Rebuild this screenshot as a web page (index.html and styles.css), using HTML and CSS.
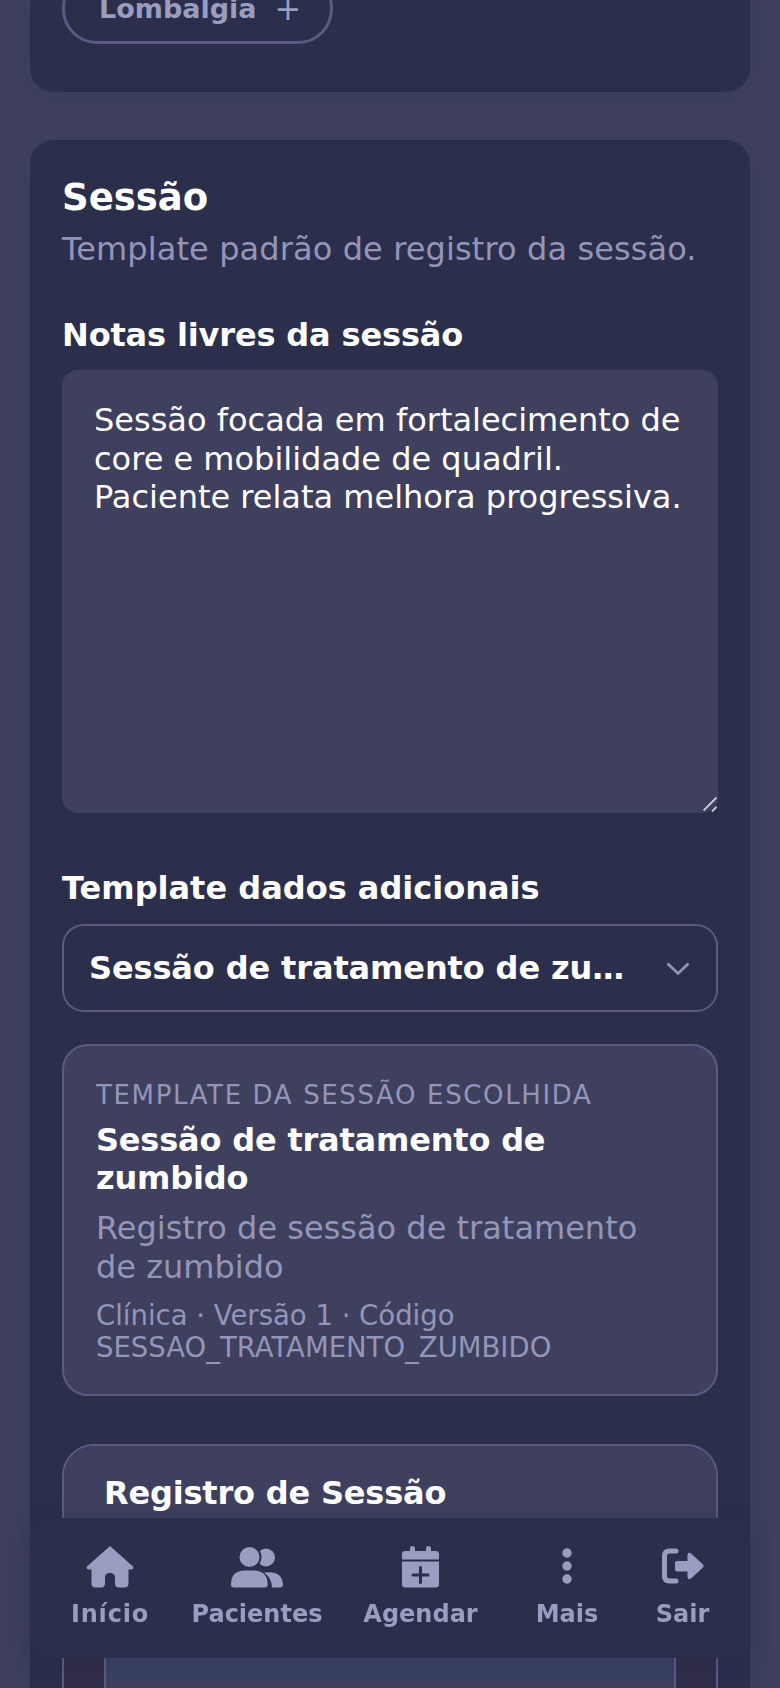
FILE: index.html
```html
<!DOCTYPE html>
<html lang="pt-BR">
<head>
<meta charset="utf-8">
<title>Sessão</title>
<link rel="stylesheet" href="styles.css">
</head>
<body>
<main class="page">
  <section class="card card-top">
    <button class="chip" type="button"><span>Lombalgia</span><span class="chip-plus">+</span></button>
  </section>
  <section class="card card-session">
    <h2 class="title">Sessão</h2>
    <p class="subtitle">Template padrão de registro da sessão.</p>
    <label class="label label-notes" for="notes">Notas livres da sessão</label>
    <div class="notes-wrap">
      <textarea class="notes" id="notes">Sessão focada em fortalecimento de core e mobilidade de quadril.
Paciente relata melhora progressiva.</textarea>
      <svg class="grip" viewBox="0 0 16 18" width="16" height="18"><path class="grip-dark" d="M1 15.500 14 2.500M9.500 16.500 14 11.700"/><path class="grip-light" d="M1.500 15.500 14.500 2.500M10 16.500 14.500 11.700"/></svg>
    </div>
    <div class="label label-template">Template dados adicionais</div>
    <div class="select">
      <span class="select-text">Sessão de tratamento de zumbido</span>
      <svg class="chevron" viewBox="0 0 24 13" width="24" height="13"><path d="M1.500 1.500 12 11.500 22.500 1.500" fill="none" stroke="currentColor" stroke-width="2.600"/></svg>
    </div>
    <div class="info">
      <div class="eyebrow">TEMPLATE DA SESSÃO ESCOLHIDA</div>
      <div class="info-title">Sessão de tratamento de zumbido</div>
      <div class="info-desc">Registro de sessão de tratamento de zumbido</div>
      <div class="info-meta">Clínica · Versão 1 · Código SESSAO_TRATAMENTO_ZUMBIDO</div>
    </div>
    <div class="record">
      <div class="record-head"><h3 class="record-title">Registro de Sessão</h3></div>
      <div class="record-body"><div class="record-inner"><div class="record-inner-top"></div></div></div>
    </div>
  </section>
</main>
<nav class="nav">
  <a class="nav-item">
    <svg class="nav-icon" viewBox="0 0 48 44" width="48" height="44"><path d="M24 1 47 21.500Q48.500 24.500 45 24.500H42.500V38Q42.500 42.500 38.500 42.500H33Q29 42.500 29 38.500V32.500Q29 28 24 28 19 28 19 32.500V38.500Q19 42.500 15 42.500H9.500Q5.500 42.500 5.500 38V24.500H3Q-.5 24.500 1 21.500Z"/></svg>
    <span class="nav-wide">Início</span>
  </a>
  <a class="nav-item">
    <svg class="nav-icon" viewBox="0 0 52 44" width="52" height="44"><circle cx="35" cy="12.500" r="9"/><circle class="cut" cx="18.500" cy="12" r="11"/><path d="M0 39.500Q0 25.500 14 25.500H22.500Q36.500 25.500 36.700 39.500 36.700 42.500 33.700 42.500H3Q0 42.500 0 39.500ZM33 27.500Q51 25 52 39.500 52 42.500 49 42.500H41Q41 33.500 33 27.500Z"/></svg>
    <span>Pacientes</span>
  </a>
  <a class="nav-item">
    <svg class="nav-icon" viewBox="0 0 37 44" width="37" height="44"><rect x="8" y="1" width="5" height="9" rx="2.500"/><rect x="24" y="1" width="5" height="9" rx="2.500"/><path d="M3 6H34Q37 6 37 9V14.500H0V9Q0 6 3 6ZM0 16.500H37V39.500Q37 42.500 34 42.500H3Q0 42.500 0 39.500Z"/><path class="plus" d="M11 30h15M18.500 22.500v15"/></svg>
    <span>Agendar</span>
  </a>
  <a class="nav-item">
    <svg class="nav-icon" viewBox="0 0 10 44" width="10" height="44"><circle cx="5" cy="8" r="4.700"/><circle cx="5" cy="21" r="4.700"/><circle cx="5" cy="34" r="4.700"/></svg>
    <span>Mais</span>
  </a>
  <a class="nav-item">
    <svg class="nav-icon" viewBox="0 0 44 44" width="44" height="44"><path class="bracket" d="M15 6H8.500Q3.500 6 3.500 11V31Q3.500 36 8.500 36H15"/><path d="M16 16H26.500V10Q27 6.500 30 8.500L42 19.500Q43.500 21 42 22.500L30 33.500Q27 35.500 26.500 32V26.500H16Q14 26.500 14 24.500V18Q14 16 16 16Z"/></svg>
    <span>Sair</span>
  </a>
</nav>
</body>
</html>
```
FILE: styles.css
```css
* { box-sizing: border-box; }
html, body { margin: 0; height: 1688px; overflow: hidden; }
body {
  background: #3e405e;
  font-family: "DejaVu Sans", Verdana, sans-serif;
  color: #fff;
}
.page {
  padding: 0 30px;
  display: flex;
  flex-direction: column;
  gap: 48px;
  margin-top: -27px;
}
.card {
  background: #2c2f4b;
  border-radius: 24px;
  padding: 32px;
  box-shadow: 0 4px 24px rgba(30, 30, 60, 0.08);
}
.card-top { padding-top: 0; padding-bottom: 48px; }
.chip {
  display: flex;
  align-items: center;
  gap: 18px;
  height: 71px;
  width: 271px;
  padding: 0 34px;
  background: transparent;
  border: 3px solid #5d5985;
  border-radius: 35px;
  color: #9a9dbf;
  font: 700 27px "DejaVu Sans", sans-serif;
}
.chip-plus { font-weight: 400; font-size: 32px; line-height: 1; }
.title { margin: 1px 0 0; font-size: 37px; line-height: 50px; font-weight: 700; }
.subtitle { margin: 5px 0 0; font-size: 32px; line-height: 42px; color: #9396b9; letter-spacing: 0.110px; }
.label { display: block; font-size: 32px; line-height: 42px; font-weight: 700; }
.label-notes { margin-top: 44px; letter-spacing: -0.150px; }
.notes-wrap { position: relative; margin-top: 14px; }
.notes {
  display: block;
  width: 656px;
  height: 443px;
  padding: 31px 32px;
  background: #3e405e;
  border: 0;
  border-radius: 16px;
  color: #fff;
  font: 400 32px/38.500px "DejaVu Sans", sans-serif;
  outline: 0;
  resize: none;
}
.grip { position: absolute; right: 0; bottom: 0; fill: none; }
.grip-dark { stroke: #14142a; stroke-width: 2; }
.grip-light { stroke: #c8c9d6; stroke-width: 2; }
.label-template { margin-top: 54px; }
.select {
  display: flex;
  align-items: center;
  gap: 31px;
  height: 88px;
  margin-top: 15px;
  padding: 0 26px 0 25px;
  border: 2px solid #5d5985;
  border-radius: 22px;
  font-size: 32px;
  font-weight: 700;
  letter-spacing: -0.12px;
}
.select-text { flex: 1; min-width: 0; white-space: nowrap; overflow: hidden; text-overflow: ellipsis; }
.chevron { flex: none; color: #9396b9; }
.info {
  margin-top: 32px;
  padding: 32px 32px 30px;
  background: #3e405e;
  border: 2px solid #5d5985;
  border-radius: 26px;
}
.eyebrow { font-size: 26px; line-height: 34px; color: #9396b9; letter-spacing: 1.640px; }
.info-title { margin-top: 9px; font-size: 32px; line-height: 38.400px; font-weight: 700; letter-spacing: -0.190px; }
.info-desc { margin-top: 11.500px; font-size: 32px; line-height: 38.400px; color: #9396b9; }
.info-meta { margin-top: 13px; font-size: 27.500px; line-height: 32.300px; color: #9396b9; }
.record {
  margin-top: 48px;
  border: 2px solid #5d5985;
  border-radius: 32px;
  height: 400px;
  overflow: hidden;
}
.record-head { background: #3e405e; height: 150px; padding: 25px 40px; }
.record-title { margin: 0; font-size: 32px; line-height: 44px; font-weight: 700; letter-spacing: -0.190px; }
.record-body { background: #302e4a; padding: 0 40px; height: 250px; }
.record-inner { border: solid #5d5985; border-width: 0 2px; background: #3e405e; height: 100%; }
.record-inner-top { background: #3a4063; height: 84px; }
.nav {
  position: fixed;
  left: 30px;
  top: 1518px;
  width: 720px;
  height: 140px;
  padding: 27px 22px 0 20px;
  display: grid;
  grid-template-columns: 120px 174px 153px 140px 91px;
  background: #2c2f4b;
  border-radius: 20px;
  box-shadow: 0 4px 24px rgba(30, 30, 60, 0.15);
}
.nav-item {
  display: flex;
  flex-direction: column;
  align-items: center;
  gap: 10px;
  color: #9a9dbf;
  font-size: 24px;
  line-height: 30px;
  font-weight: 700;
}
.nav-wide { letter-spacing: 0.800px; }
.nav-icon { fill: currentColor; display: block; }
.cut { stroke: #2c2f4b; stroke-width: 2; }
.plus { fill: none; stroke: #2c2f4b; stroke-width: 3; stroke-linecap: round; }
.bracket { fill: none; stroke: currentColor; stroke-width: 5; stroke-linecap: round; }
```
